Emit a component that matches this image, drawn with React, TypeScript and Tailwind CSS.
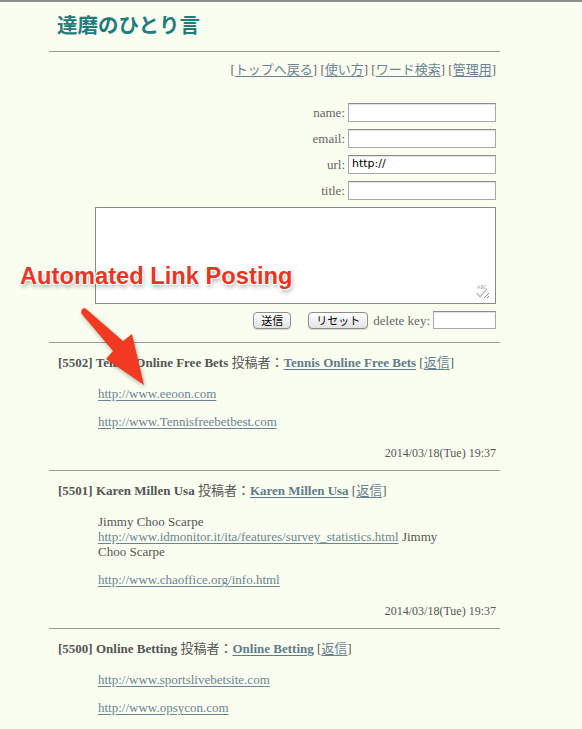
import React from "react";

function Link({ children, bold = false }: { children: React.ReactNode; bold?: boolean }) {
  return (
    <a
      href="#"
      className={
        bold
          ? "font-bold text-[#5f7c8c] underline decoration-[#5f7c8c] underline-offset-[2px]"
          : "text-[#6a8493] underline decoration-[#6a8493] underline-offset-[2px]"
      }
    >
      {children}
    </a>
  );
}

function Post({
  no,
  title,
  lines,
  date,
}: {
  no: string;
  title: string;
  lines: React.ReactNode[];
  date?: string;
}) {
  return (
    <div>
      <div className="mt-[12px] pl-[9px] leading-[15px] text-[#555]">
        <span className="font-bold">
          [{no}] {title}
        </span>{" "}
        投稿者：<Link bold>{title}</Link> [<Link>返信</Link>]
      </div>
      <div className="mt-[16px] pl-[49px] flex flex-col gap-[13px] leading-[15px]">
        {lines.map((l, i) => (
          <div key={i}>{l}</div>
        ))}
      </div>
      {date && (
        <>
          <div className="mt-[17px] pr-[4px] text-right text-[12px] leading-[15px] text-[#555]">{date}</div>
          <div className="mt-[9px] border-t border-[#9a9a9a]" />
        </>
      )}
    </div>
  );
}

function Field({ label, value }: { label: string; value?: string }) {
  return (
    <div className="flex items-center gap-[3px]">
      <span className="text-[#666] leading-[15px]">{label}</span>
      <div className="w-[148px] h-[19px] bg-white border border-[#a8a8a8] border-t-[#8c8c8c] shadow-[inset_0_1px_1px_rgba(0,0,0,0.12)] flex items-center pl-[3px] font-['DejaVu_Sans',sans-serif] text-[11px] text-black">
        {value}
      </div>
    </div>
  );
}

export default function App() {
  return (
    <div className="relative min-h-screen bg-[#fafef1] border-t-2 border-[#8f8f8f] font-['Liberation_Serif','Noto_Sans_CJK_JP',serif] text-[13px] text-[#555] overflow-hidden">
      <div className="ml-[49px] w-[451px] pb-[40px]">
        <h1 className="mt-[9px] pl-[8px] text-[20.5px] leading-[30px] font-bold text-[#1f7d7d]">達磨のひとり言</h1>
        <div className="mt-[10px] border-t border-[#9a9a9a]" />
        <div className="mt-[10px] pr-[4px] text-right leading-[15px] text-[#666]">
          [<Link>トップへ戻る</Link>] [<Link>使い方</Link>] [<Link>ワード検索</Link>] [<Link>管理用</Link>]
        </div>

        <div className="mt-[26px] pr-[4px] flex flex-col items-end gap-[7px]">
          <Field label="name:" />
          <Field label="email:" />
          <Field label="url:" value="http://" />
          <Field label="title:" />
          <div className="relative w-[401px] h-[97px] bg-white border border-[#8a8a8a]">
            <svg className="absolute right-[5px] bottom-[4px]" width="14" height="15" viewBox="0 0 14 15">
              <text x="1" y="5" fontSize="5" fill="#aaa" fontFamily="DejaVu Sans, sans-serif">ABC</text>
              <path d="M1 9 L4 13 L11 5" stroke="#bbb" strokeWidth="1.3" fill="none" />
              <path d="M8 14 L13 9 M11 14 L13 12" stroke="#666" strokeWidth="0.8" />
            </svg>
          </div>
          <div className="flex items-center">
            <button className="w-[38px] h-[17px] rounded-[4px] border border-[#8d8d8d] bg-gradient-to-b from-white to-[#e2e2e2] shadow-[0_1px_1px_rgba(0,0,0,0.15)] font-['Noto_Sans_CJK_JP',sans-serif] text-[11px] leading-none text-black">
              送信
            </button>
            <button className="ml-[17px] w-[60px] h-[17px] rounded-[4px] border border-[#8d8d8d] bg-gradient-to-b from-white to-[#e2e2e2] shadow-[0_1px_1px_rgba(0,0,0,0.15)] font-['Noto_Sans_CJK_JP',sans-serif] text-[11px] leading-none text-black">
              リセット
            </button>
            <span className="ml-[5px] text-[#666] leading-[15px]">delete key:</span>
            <div className="ml-[3px] w-[63px] h-[18px] bg-white border border-[#a8a8a8] border-t-[#8c8c8c] shadow-[inset_0_1px_1px_rgba(0,0,0,0.12)]" />
          </div>
        </div>

        <div className="mt-[13px] border-t border-[#9a9a9a]" />

        <Post
          no="5502"
          title="Tennis Online Free Bets"
          lines={[<Link>http://www.eeoon.com</Link>, <Link>http://www.Tennisfreebetbest.com</Link>]}
          date="2014/03/18(Tue) 19:37"
        />
        <Post
          no="5501"
          title="Karen Millen Usa"
          lines={[
            <span>
              Jimmy Choo Scarpe
              <br />
              <Link>http://www.idmonitor.it/ita/features/survey_statistics.html</Link> Jimmy
              <br />
              Choo Scarpe
            </span>,
            <Link>http://www.chaoffice.org/info.html</Link>,
          ]}
          date="2014/03/18(Tue) 19:37"
        />
        <Post
          no="5500"
          title="Online Betting"
          lines={[<Link>http://www.sportslivebetsite.com</Link>, <Link>http://www.opsycon.com</Link>]}
        />
      </div>

      <div className="absolute left-[20px] top-[263px] font-['Liberation_Sans',Arial,sans-serif] font-bold text-[23.7px] leading-none text-[#ea3520] whitespace-nowrap [text-shadow:1px_0_0_#fff,-1px_0_0_#fff,0_1px_0_#fff,0_-1px_0_#fff,1px_1px_0_#fff,-1px_-1px_0_#fff,1px_-1px_0_#fff,-1px_1px_0_#fff,1px_3px_4px_rgba(0,0,0,0.35)]">
        Automated Link Posting
      </div>
      <svg
        className="absolute left-0 top-0 pointer-events-none drop-shadow-[1px_2px_2px_rgba(0,0,0,0.3)]"
        width="582"
        height="729"
        viewBox="0 0 582 729"
      >
        <polygon points="85,306 123,339 132,332 144,383 106,357 113,349 81,311 82,307" fill="#f23a22" />
      </svg>
    </div>
  );
}
